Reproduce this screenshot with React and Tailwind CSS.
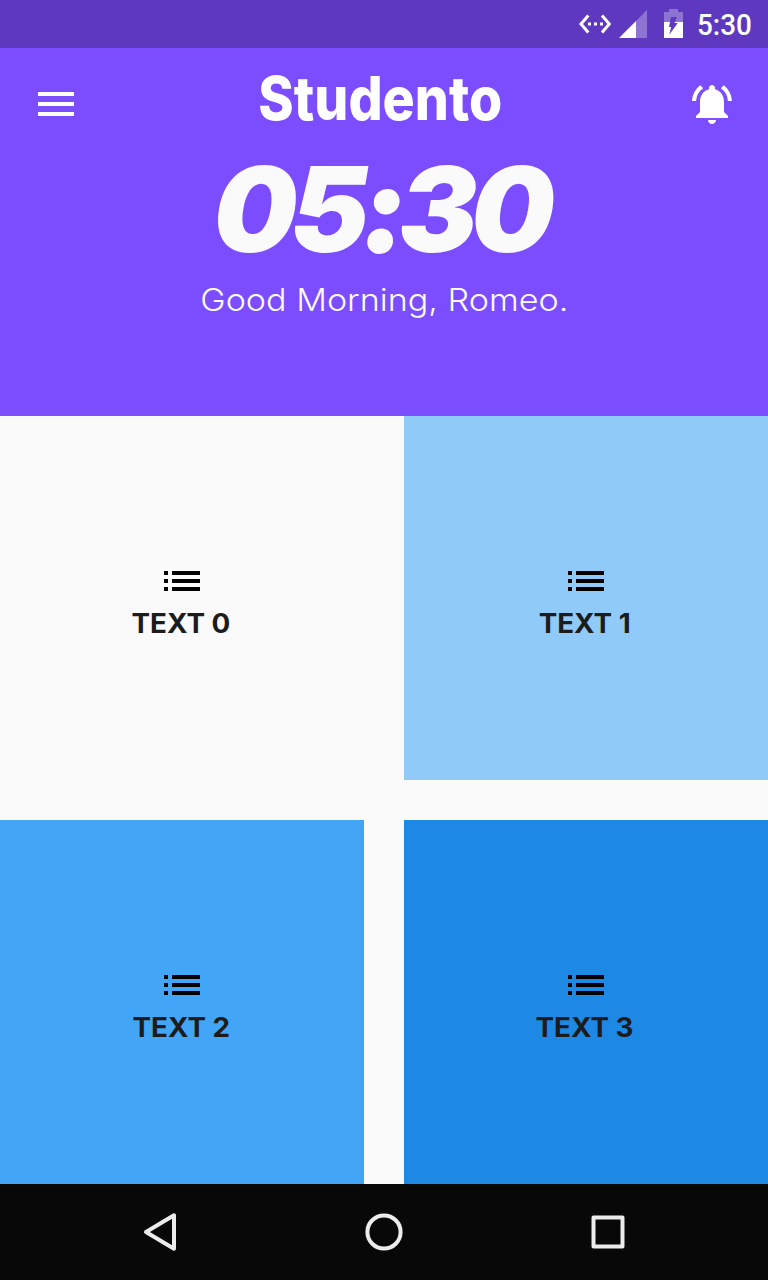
import React from "react";
import { MdMenu, MdNotificationsActive, MdList } from "react-icons/md";

function StatusBar() {
  return (
    <div className="flex h-12 items-center justify-end bg-[#5e39bf] pr-4 text-white">
      <svg className="h-12 w-[120px] shrink-0" viewBox="576 0 120 48" fill="none">
        <path d="M588.3 15.5 581 24l7.3 8.500M602 15.500 609.300 24l-7.300 8.500" stroke="#fff" strokeWidth="3" />
        <path d="M588 22.500h3v3h-3zM594 22.500h3v3h-3zM600 22.500h3v3h-3z" fill="#fff" />
        <path d="M647 10v28h-11V21z" fill="#fff" fillOpacity=".3" />
        <path d="M636 21v17h-17z" fill="#fff" />
        <path d="M669 9h9v3h5v10h-19V12h5z" fill="#fff" fillOpacity=".3" />
        <path d="M664 22h19v16h-19z" fill="#fff" />
        <path d="M671 17h6l-2.500 6h3.300l-8.600 11.800 2-7.800H669z" fill="#5e39bf" />
      </svg>
      <span className="ml-px block w-[55px] whitespace-nowrap pt-0.5 font-['Roboto',sans-serif] text-[29px] font-medium leading-[46px]">
        <span className="inline-block origin-left scale-x-[.96]">5:30</span>
      </span>
    </div>
  );
}

function Header() {
  return (
    <header className="h-[368px] bg-[#7c4dff] pt-8 text-white">
      <div className="flex h-12 items-center justify-between px-8">
        <MdMenu size={48} />
        <h1 className="mr-2 flex h-12 w-[244px] items-center justify-center whitespace-nowrap pb-3 font-['Inter',sans-serif] text-[60px] font-extrabold leading-[48px]">
          <span className="scale-x-[.895]">Studento</span>
        </h1>
        <MdNotificationsActive size={48} />
      </div>
      <div className="mt-[22px] flex h-[118px] items-center justify-center whitespace-nowrap pr-[7px] font-['Inter',sans-serif] text-[118px] font-black italic leading-[118px] tracking-[-7px] text-[#fafafa] [font-feature-settings:'calt'_0]">
        <span>
          05<span className="[-webkit-text-stroke:2px_#fafafa]">:</span>30
        </span>
      </div>
      <p className="mt-3 flex h-10 items-center justify-center whitespace-nowrap font-['Inter',sans-serif] text-[31px] font-[340] leading-10 text-[#fafafa]">
        <span className="scale-x-[1.1]">Good Morning, Romeo.</span>
      </p>
    </header>
  );
}

const tiles = [
  { label: "TEXT 0", color: "bg-[#fafafa]" },
  { label: "TEXT 1", color: "bg-[#90caf9]" },
  { label: "TEXT 2", color: "bg-[#42a5f5]" },
  { label: "TEXT 3", color: "bg-[#1e88e5]" },
];

function Tile({ label, color }) {
  return (
    <div className={"flex h-[364px] flex-col items-center pt-[141px] " + color}>
      <MdList size={48} className="text-black" />
      <span className="scale-x-[1.03] pr-0.5 pt-px font-['Inter',sans-serif] text-[27px] font-bold leading-9 text-[#1c1c1c]">
        {label}
      </span>
    </div>
  );
}

function NavBar() {
  return (
    <nav className="grid h-24 grid-cols-[320px_128px_320px] items-center justify-items-center bg-[#080808]">
      <svg className="h-12 w-12" viewBox="0 0 48 48" fill="none" stroke="#ececec" strokeWidth="4" strokeLinejoin="round">
        <path d="M38 7.300v33.400L10 24z" />
      </svg>
      <svg className="h-12 w-12" viewBox="0 0 48 48" fill="none" stroke="#ececec" strokeWidth="4">
        <circle cx="24" cy="24" r="16.600" />
      </svg>
      <svg className="h-12 w-12" viewBox="0 0 48 48" fill="none" stroke="#ececec" strokeWidth="4" strokeLinejoin="round">
        <path d="M9.500 9.500h29v29h-29z" />
      </svg>
    </nav>
  );
}

export default function App() {
  return (
    <div className="flex h-[1280px] w-[768px] flex-col overflow-hidden bg-[#fafafa]">
      <StatusBar />
      <Header />
      <main className="grid h-[768px] grid-cols-2 gap-10">
        {tiles.map((tile) => (
          <Tile key={tile.label} {...tile} />
        ))}
      </main>
      <NavBar />
    </div>
  );
}
